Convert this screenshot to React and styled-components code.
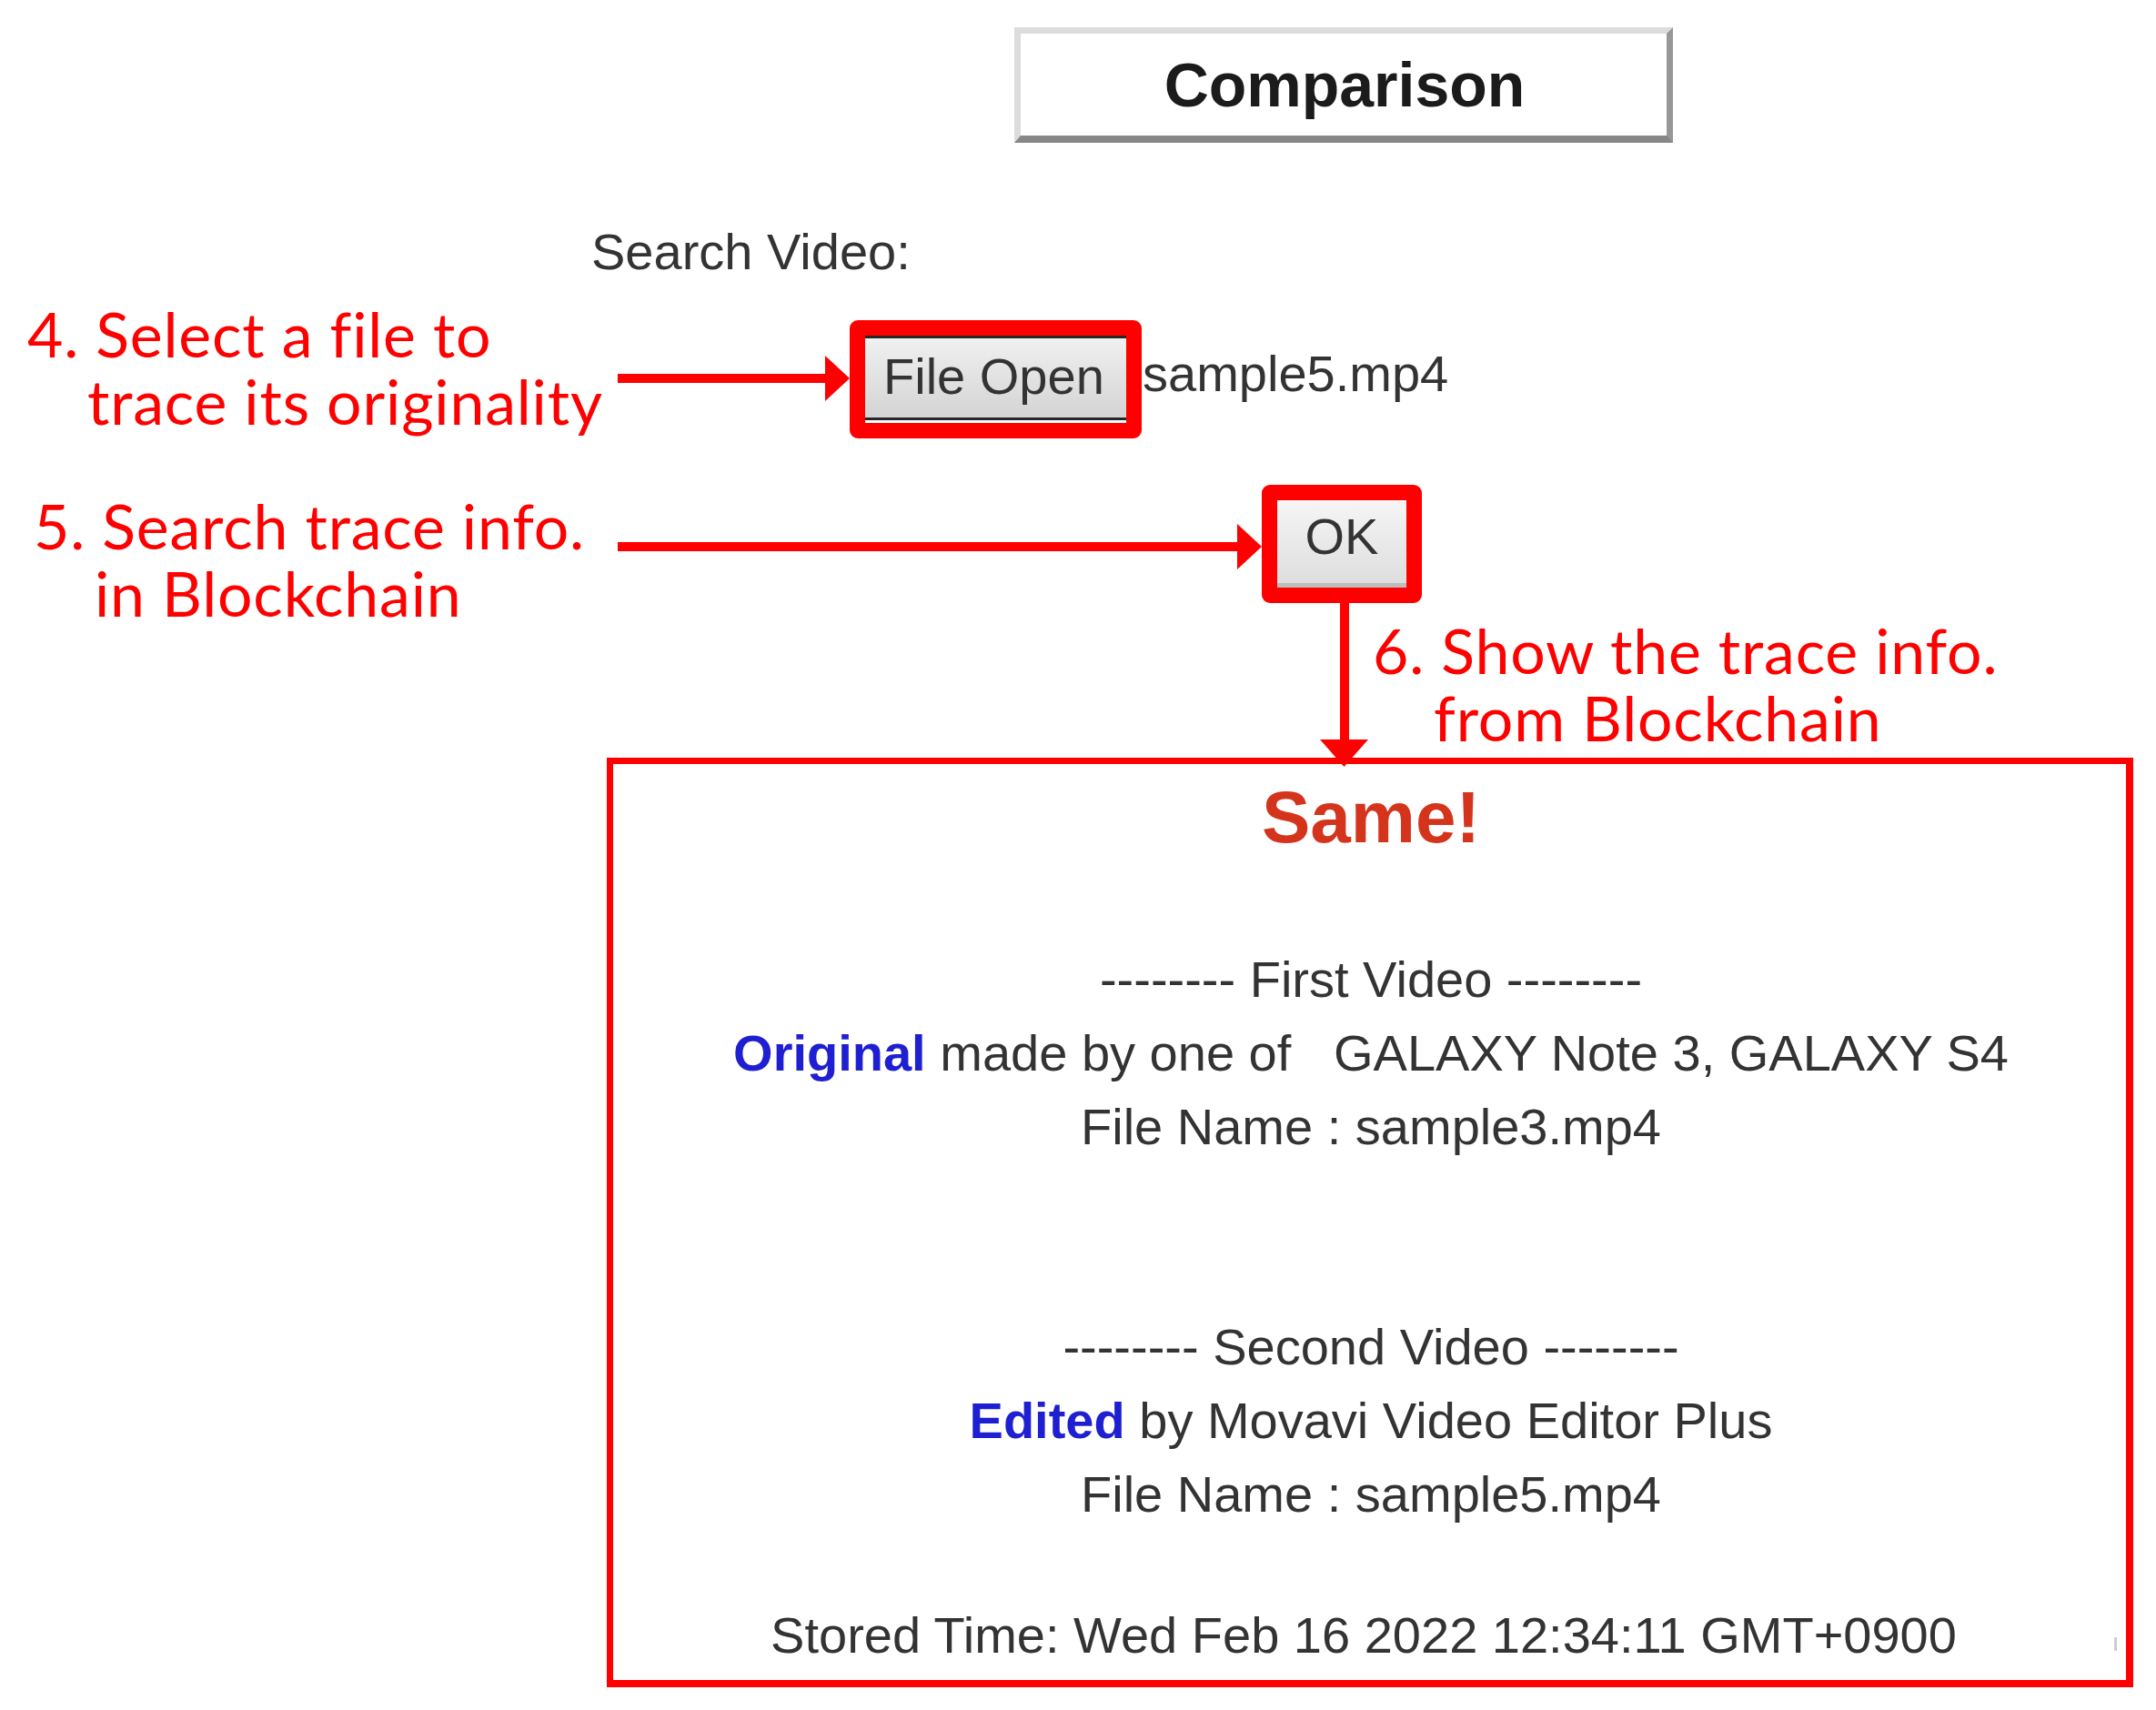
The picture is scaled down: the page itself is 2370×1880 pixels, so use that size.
import React from "react";
import styled, { createGlobalStyle } from "styled-components";

const GlobalStyle = createGlobalStyle`
  html, body { margin: 0; padding: 0; background: #ffffff; }
  body { font-family: "Liberation Sans", Arial, sans-serif; }
  #root { width: 2370px; height: 1880px; overflow: hidden; }
`;

const Page = styled.div`
  width: 2370px;
  height: 1880px;
  box-sizing: border-box;
  padding-top: 30px;
  display: flex;
  flex-direction: column;
  background: #ffffff;
  color: #333333;
`;

const TitleRow = styled.div`
  display: flex;
  padding-left: 1115px;
`;

const TitleBox = styled.div`
  box-sizing: border-box;
  width: 724px;
  height: 127px;
  border: 7px solid;
  border-color: #dcdcdc #979797 #878787 #dcdcdc;
  border-bottom-width: 8px;
  display: flex;
  align-items: center;
  justify-content: center;
  padding-left: 2px;
  font-weight: 700;
  font-size: 68px;
  line-height: 1;
  color: #1b1b1b;
`;

const SearchLabel = styled.div`
  margin-top: 88px;
  padding-left: 650px;
  font-size: 56px;
  line-height: 64px;
  color: #333333;
`;

const StepRow = styled.div`
  display: flex;
  align-items: flex-start;
  height: ${(p) => p.$h}px;
  margin-top: ${(p) => p.$mt || 0}px;
  padding-left: ${(p) => p.$pl || 0}px;
`;

const Annotation = styled.div`
  flex: none;
  box-sizing: border-box;
  ${(p) => (p.$w ? `width: ${p.$w}px;` : "")}
  padding-left: ${(p) => p.$pl || 0}px;
  margin-top: ${(p) => p.$mt || 0}px;
  font-family: Lato, "Open Sans", sans-serif;
  font-size: 68px;
  letter-spacing: 0.8px;
  line-height: 74px;
  color: #ff0000;
  white-space: nowrap;
`;

const AnnLine = styled.div`
  padding-left: ${(p) => p.$indent || 0}px;
`;

const ArrowSvg = styled.svg`
  flex: none;
  display: block;
  margin-top: ${(p) => p.$mt}px;
`;

function Arrow({ length, mt }) {
  return (
    <ArrowSvg $mt={mt} width={length} height={50} viewBox={`0 0 ${length} 50`}>
      <rect x="0" y="20" width={length - 26} height="10" fill="#ff0000" />
      <polygon points={`${length - 27},0 ${length},25 ${length - 27},50`} fill="#ff0000" />
    </ArrowSvg>
  );
}

const ConnectorSvg = styled.svg`
  flex: none;
  display: block;
  position: relative;
  z-index: 1;
`;

function Connector() {
  return (
    <ConnectorSvg width={53} height={180} viewBox="0 0 53 180">
      <rect x="22" y="0" width="10" height="151" fill="#ff0000" />
      <polygon points="0,150 53,150 26.5,180" fill="#ff0000" />
    </ConnectorSvg>
  );
}

const HighlightFrame = styled.div`
  flex: none;
  box-sizing: border-box;
  width: ${(p) => p.$w}px;
  height: ${(p) => p.$h}px;
  margin-top: ${(p) => p.$mt || 0}px;
  border: 17px solid #ff0000;
  border-radius: 9px;
  background: #ff0000;
  display: flex;
`;

const FileButton = styled.div`
  flex: 1;
  display: flex;
  align-items: center;
  box-sizing: border-box;
  padding: 0 0 7px 20px;
  border-top: 3px solid #262626;
  border-bottom: 3px solid #ffffff;
  box-shadow: inset 0 -3px 0 #262626;
  background: linear-gradient(#f0f0f0, #d3d3d3);
  font-size: 56px;
  line-height: 64px;
  color: #333333;
  white-space: nowrap;
`;

const OkButton = styled.div`
  flex: 1;
  display: flex;
  align-items: center;
  justify-content: center;
  box-sizing: border-box;
  padding-bottom: 12px;
  border-top: 1px solid #fafafa;
  border-bottom: 5px solid #bdbdbd;
  background: linear-gradient(#f5f5f5, #dedede);
  font-size: 56px;
  line-height: 64px;
  color: #333333;
`;

const FileName = styled.div`
  flex: none;
  margin-left: 1px;
  margin-top: 49px;
  font-size: 56px;
  line-height: 64px;
  color: #333333;
  white-space: nowrap;
`;

const ResultBox = styled.div`
  position: relative;
  box-sizing: border-box;
  margin-left: 667px;
  width: 1678px;
  height: 1022px;
  border: 7px solid #ff0000;
  border-right-width: 8px;
  border-bottom-width: 8px;
  padding: 11px 0 0 3px;
  text-align: center;
  color: #333333;
`;

const Verdict = styled.div`
  font-size: 80px;
  font-weight: 700;
  line-height: 96px;
  color: #d5341c;
`;

const InfoBlock = styled.div`
  margin-top: ${(p) => p.$mt}px;
  padding-right: ${(p) => p.$shift || 0}px;
`;

const InfoLine = styled.div`
  font-size: 56px;
  line-height: 81px;
  white-space: nowrap;
`;

const Keyword = styled.span`
  font-weight: 700;
  color: #1f1fd2;
`;

const ScrollMark = styled.span`
  position: absolute;
  right: 10px;
  top: 960px;
  width: 3px;
  height: 15px;
  background: #c9cdd6;
`;

export default function App() {
  return (
    <>
      <GlobalStyle />
      <Page>
        <TitleRow>
          <TitleBox>Comparison</TitleBox>
        </TitleRow>

        <SearchLabel>Search Video:</SearchLabel>

        <StepRow $h={152} $mt={21}>
          <Annotation $w={679} $pl={30}>
            <AnnLine>4. Select a file to</AnnLine>
            <AnnLine $indent={66}>trace its originality</AnnLine>
          </Annotation>
          <Arrow length={255} mt={61} />
          <HighlightFrame $w={321} $h={130} $mt={22}>
            <FileButton>File Open</FileButton>
          </HighlightFrame>
          <FileName>sample5.mp4</FileName>
        </StepRow>

        <StepRow $h={130} $mt={51}>
          <Annotation $w={679} $pl={37} $mt={8}>
            <AnnLine>5. Search trace info.</AnnLine>
            <AnnLine $indent={67}>in Blockchain</AnnLine>
          </Annotation>
          <Arrow length={708} mt={43} />
          <HighlightFrame $w={176} $h={130}>
            <OkButton>OK</OkButton>
          </HighlightFrame>
        </StepRow>

        <StepRow $h={170} $pl={1451}>
          <Connector />
          <Annotation $pl={5} $mt={15}>
            <AnnLine>6. Show the trace info.</AnnLine>
            <AnnLine $indent={67}>from Blockchain</AnnLine>
          </Annotation>
        </StepRow>

        <ResultBox>
          <Verdict>Same!</Verdict>
          <InfoBlock $mt={89}>
            <InfoLine>-------- First Video --------</InfoLine>
            <InfoLine>
              <Keyword>Original</Keyword> made by one of{"\u00a0\u00a0\u00a0"}GALAXY Note 3, GALAXY S4
            </InfoLine>
            <InfoLine>File Name : sample3.mp4</InfoLine>
          </InfoBlock>
          <InfoBlock $mt={161}>
            <InfoLine>-------- Second Video --------</InfoLine>
            <InfoLine>
              <Keyword>Edited</Keyword> by Movavi Video Editor Plus
            </InfoLine>
            <InfoLine>File Name : sample5.mp4</InfoLine>
          </InfoBlock>
          <InfoBlock $mt={74} $shift={16}>
            <InfoLine>Stored Time: Wed Feb 16 2022 12:34:11 GMT+0900</InfoLine>
          </InfoBlock>
          <ScrollMark />
        </ResultBox>
      </Page>
    </>
  );
}
